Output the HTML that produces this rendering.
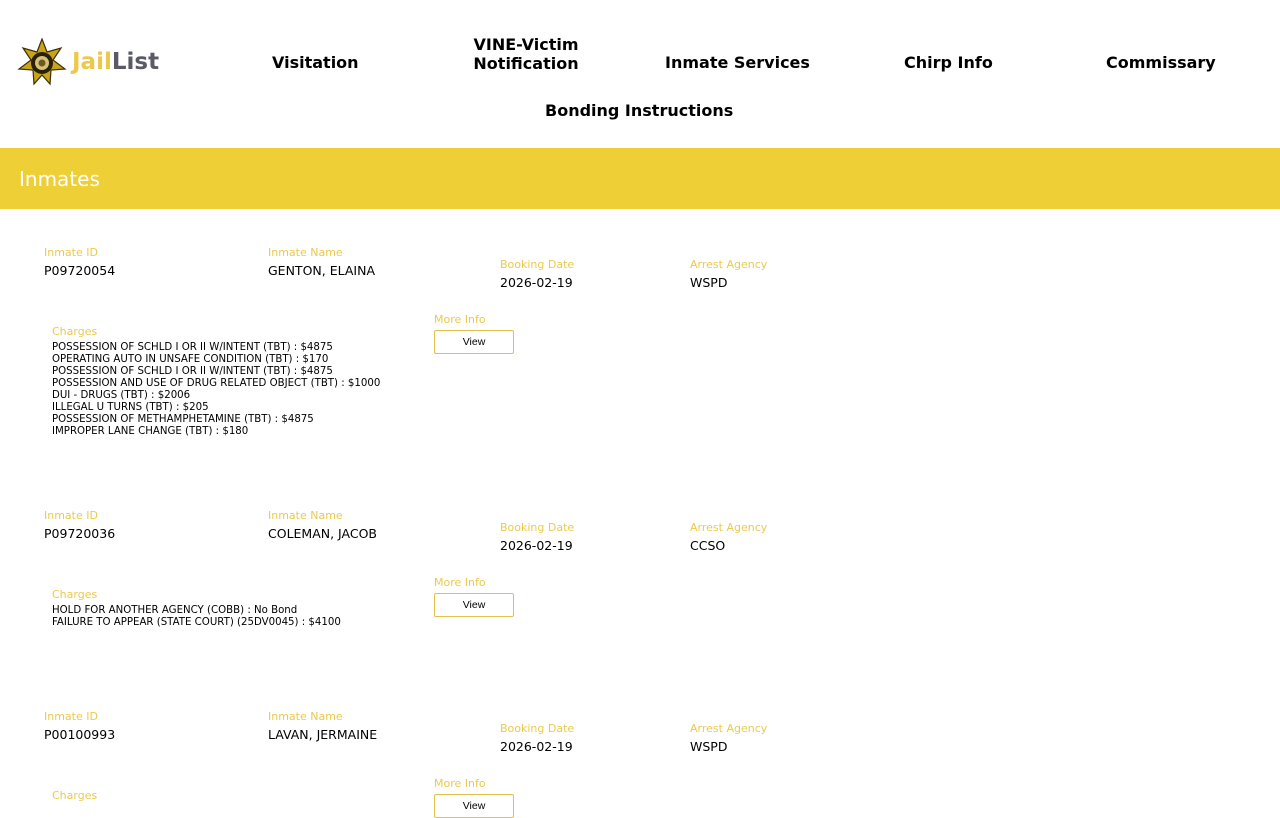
<!DOCTYPE html>
<html><head><style>
body{margin:0;width:1280px;height:800px;overflow:hidden;background:#fff;font-family:"DejaVu Sans",Verdana,sans-serif;color:#000;position:relative}
.a{position:absolute;white-space:nowrap}
.nav{font-weight:bold;font-size:16px;text-align:center;line-height:19px}
.lbl{color:#ecc94b;font-size:11px}
.val{font-size:12.5px}
.ch{font-size:10.2px;line-height:12px}
.btn{border:1px solid #e0c24a;border-radius:2px;width:78px;height:22px;font-size:10.5px;text-align:center;line-height:22px;font-family:"Liberation Sans",Arial,sans-serif}
</style></head><body>
<svg class="a" style="left:16px;top:38px" width="52" height="50" viewBox="0 0 52 50">
<polygon points="26,1 31,14 45,10 37,22 49,31 35,32 34,46 26,37 18,46 17,32 3,31 15,22 7,10 21,14" fill="#c9a41a" stroke="#3a2e05" stroke-width="1.2"/>
<circle cx="26" cy="25" r="11" fill="#2a2206"/><circle cx="26" cy="25" r="7" fill="#d6c07a"/><circle cx="26" cy="25" r="3.5" fill="#6b5a20"/>
</svg>
<div class="a" style="left:72px;top:49px;font-weight:bold;font-size:23px;font-family:'DejaVu Sans',sans-serif"><span style="color:#ecc94b">Jail</span><span style="color:#5a5a66">List</span></div>
<div class="a nav" style="left:272px;top:53px">Visitation</div>
<div class="a nav" style="left:466px;top:35px;width:120px">VINE-Victim<br>Notification</div>
<div class="a nav" style="left:665px;top:53px">Inmate Services</div>
<div class="a nav" style="left:904px;top:53px">Chirp Info</div>
<div class="a nav" style="left:1106px;top:53px">Commissary</div>
<div class="a nav" style="left:545px;top:101px">Bonding Instructions</div>
<div class="a" style="left:0;top:148px;width:1280px;height:61px;background:#eecf35"></div>
<div class="a" style="left:19px;top:167px;color:#fff;font-size:20px">Inmates</div>

<div class="a" style="left:0;top:1px;width:1280px">
<div class="a lbl" style="left:44px;top:245px">Inmate ID</div><div class="a val" style="left:44px;top:262px">P09720054</div>
<div class="a lbl" style="left:268px;top:245px">Inmate Name</div><div class="a val" style="left:268px;top:262px">GENTON, ELAINA</div>
<div class="a lbl" style="left:500px;top:257px">Booking Date</div><div class="a val" style="left:500px;top:274px">2026-02-19</div>
<div class="a lbl" style="left:690px;top:257px">Arrest Agency</div><div class="a val" style="left:690px;top:274px">WSPD</div>
<div class="a lbl" style="left:52px;top:324px">Charges</div>
<div class="a ch" style="left:52px;top:341px">POSSESSION OF SCHLD I OR II W/INTENT (TBT) : $4875<br>OPERATING AUTO IN UNSAFE CONDITION (TBT) : $170<br>POSSESSION OF SCHLD I OR II W/INTENT (TBT) : $4875<br>POSSESSION AND USE OF DRUG RELATED OBJECT (TBT) : $1000<br>DUI - DRUGS (TBT) : $2006<br>ILLEGAL U TURNS (TBT) : $205<br>POSSESSION OF METHAMPHETAMINE (TBT) : $4875<br>IMPROPER LANE CHANGE (TBT) : $180</div>
<div class="a lbl" style="left:434px;top:312px">More Info</div><div class="a btn" style="left:434px;top:329px">View</div>
</div>

<div class="a" style="left:0;top:264px;width:1280px">
<div class="a lbl" style="left:44px;top:245px">Inmate ID</div><div class="a val" style="left:44px;top:262px">P09720036</div>
<div class="a lbl" style="left:268px;top:245px">Inmate Name</div><div class="a val" style="left:268px;top:262px">COLEMAN, JACOB</div>
<div class="a lbl" style="left:500px;top:257px">Booking Date</div><div class="a val" style="left:500px;top:274px">2026-02-19</div>
<div class="a lbl" style="left:690px;top:257px">Arrest Agency</div><div class="a val" style="left:690px;top:274px">CCSO</div>
<div class="a lbl" style="left:52px;top:324px">Charges</div>
<div class="a ch" style="left:52px;top:341px">HOLD FOR ANOTHER AGENCY (COBB) : No Bond<br>FAILURE TO APPEAR (STATE COURT) (25DV0045) : $4100</div>
<div class="a lbl" style="left:434px;top:312px">More Info</div><div class="a btn" style="left:434px;top:329px">View</div>
</div>

<div class="a" style="left:0;top:465px;width:1280px">
<div class="a lbl" style="left:44px;top:245px">Inmate ID</div><div class="a val" style="left:44px;top:262px">P00100993</div>
<div class="a lbl" style="left:268px;top:245px">Inmate Name</div><div class="a val" style="left:268px;top:262px">LAVAN, JERMAINE</div>
<div class="a lbl" style="left:500px;top:257px">Booking Date</div><div class="a val" style="left:500px;top:274px">2026-02-19</div>
<div class="a lbl" style="left:690px;top:257px">Arrest Agency</div><div class="a val" style="left:690px;top:274px">WSPD</div>
<div class="a lbl" style="left:52px;top:324px">Charges</div>
<div class="a lbl" style="left:434px;top:312px">More Info</div><div class="a btn" style="left:434px;top:329px">View</div>
</div>
</body></html>
